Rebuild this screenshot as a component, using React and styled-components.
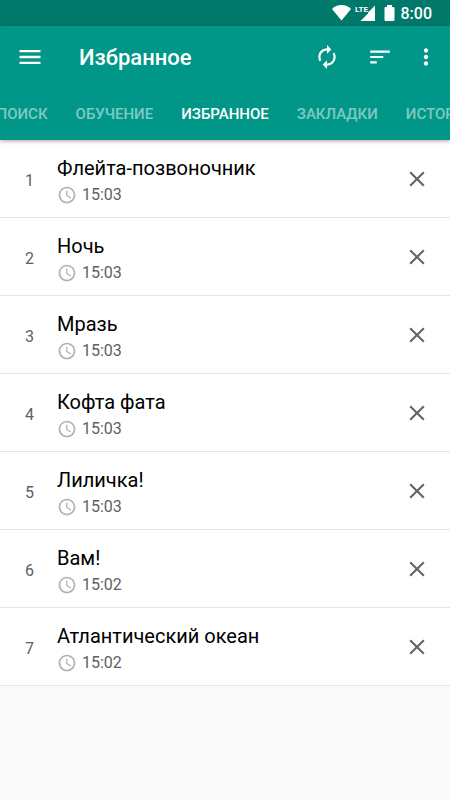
// node_modules
import React from "react";
import styled, { createGlobalStyle } from "styled-components";
import { MdAccessTime, MdAutorenew, MdClose, MdMenu, MdMoreVert, MdSort } from "react-icons/md";

// Constants
const Colors = {
    primary: "#009688",
    primaryDark: "#00796b",
    white: "#ffffff",
    background: "#fafafa",
    divider: "#e6e6e6",
    text: "#000000",
    textSecondary: "#606060",
    icon: "#666666",
    iconLight: "#b0b0b0",
    tab: "rgba(255, 255, 255, 0.5)"
};

const poems = [
    { title: "Флейта-позвоночник", time: "15:03" },
    { title: "Ночь", time: "15:03" },
    { title: "Мразь", time: "15:03" },
    { title: "Кофта фата", time: "15:03" },
    { title: "Лиличка!", time: "15:03" },
    { title: "Вам!", time: "15:02" },
    { title: "Атлантический океан", time: "15:02" }
];

// Styles
const GlobalStyle = createGlobalStyle`
    * {
        box-sizing: border-box;
    }

    body {
        margin: 0;
        background: ${Colors.background};
        color: ${Colors.text};
        font-family: Roboto, "Noto Sans", sans-serif;
    }

    button {
        margin: 0;
        padding: 0;
        border: 0;
        background: none;
        color: inherit;
        font: inherit;
        cursor: pointer;
    }

    svg {
        display: block;
        flex: none;
    }
`;

const StatusBar = styled.div`
    display: flex;
    align-items: center;
    justify-content: flex-end;
    height: 26px;
    padding-right: 18px;
    background: ${Colors.primaryDark};
    color: ${Colors.white};
`;

const Clock = styled.time`
    margin-left: 6px;
    padding-top: 2px;
    font-size: 16px;
    font-weight: 500;
    line-height: 24px;
`;

const AppBar = styled.header`
    position: relative;
    background: ${Colors.primary};
    color: ${Colors.white};
    box-shadow: 0 1px 4px rgba(60, 20, 30, 0.4);
`;

const Toolbar = styled.div`
    display: flex;
    align-items: center;
    height: 62px;
    padding: 0 11px 0 10px;
`;

const ToolbarTitle = styled.h1`
    flex: 1;
    margin: 0 0 0 29px;
    padding-top: 2px;
    font-size: 22px;
    font-weight: 500;
    line-height: 32px;
`;

const IconButton = styled.button`
    display: flex;
    align-items: center;
    justify-content: center;
    width: ${(props) => props.$width || 40}px;
    height: 40px;
`;

const Actions = styled.div`
    display: flex;
    gap: 13px;
`;

// The selected tab stays centered, its neighbours run off both edges
const Tabs = styled.nav`
    display: grid;
    grid-template-columns: minmax(0, 1fr) auto minmax(0, 1fr);
    gap: 28px;
    height: 52px;
`;

const TabGroup = styled.div`
    display: flex;
    justify-content: ${(props) => props.$align};
    gap: 28px;
    overflow: hidden;
`;

const Tab = styled.button`
    flex: none;
    color: ${(props) => (props.$active ? Colors.white : Colors.tab)};
    font-size: 15px;
    font-weight: 500;
    text-transform: uppercase;
`;

const List = styled.ol`
    margin: 0;
    padding: 0;
    list-style: none;
    background: ${Colors.white};
`;

const Row = styled.li`
    display: flex;
    align-items: center;
    height: 78px;
    padding-right: 13px;
    border-bottom: 1px solid ${Colors.divider};
`;

const RowNumber = styled.span`
    width: 57px;
    padding: 4px 0 0 2px;
    color: ${Colors.textSecondary};
    font-size: 16px;
    line-height: 24px;
    text-align: center;
`;

const RowBody = styled.div`
    flex: 1;
    min-width: 0;
    padding-top: 4px;
`;

const RowTitle = styled.h2`
    margin: 0 0 1px;
    font-size: 20px;
    font-weight: 400;
    line-height: 28px;
`;

const RowTime = styled.div`
    display: flex;
    align-items: center;
    gap: 5px;
    color: ${Colors.textSecondary};
    font-size: 16px;
    line-height: 24px;
`;

const RemoveButton = styled(IconButton)`
    color: ${Colors.icon};
`;

const SignalIcons = () => (
    <svg width="64" height="26" viewBox="0 0 64 26" fill="currentColor" aria-hidden="true">
        <path d="M1 9C3.500 6.500 6.500 5 10.500 5S17.500 6.500 20 9L10.500 20.500z" />
        <path d="M44 5.500V21H29.500L37 13.500V12.500z" />
        <text x="24" y="12" fontFamily="Liberation Sans Narrow, Roboto, sans-serif" fontSize="8" fontWeight="700">
            LTE
        </text>
        <path d="M56 5h5v2h1.500q1 0 1 1v12q0 1-1 1h-8q-1 0-1-1V8q0-1 1-1H56z" />
    </svg>
);

const PoemRow = ({ number, title, time }) => (
    <Row>
        <RowNumber>{number}</RowNumber>
        <RowBody>
            <RowTitle>{title}</RowTitle>
            <RowTime>
                <MdAccessTime size={20} color={Colors.iconLight} />
                <time>{time}</time>
            </RowTime>
        </RowBody>
        <RemoveButton type="button" aria-label={`Удалить: ${title}`}>
            <MdClose size={26} />
        </RemoveButton>
    </Row>
);

const App = () => (
    <>
        <GlobalStyle />
        <StatusBar>
            <SignalIcons />
            <Clock>8:00</Clock>
        </StatusBar>
        <AppBar>
            <Toolbar>
                <IconButton type="button" aria-label="Меню">
                    <MdMenu size={28} />
                </IconButton>
                <ToolbarTitle>Избранное</ToolbarTitle>
                <Actions>
                    <IconButton type="button" aria-label="Обновить">
                        <MdAutorenew size={26} />
                    </IconButton>
                    <IconButton type="button" aria-label="Сортировка">
                        <MdSort size={26} />
                    </IconButton>
                    <IconButton type="button" aria-label="Ещё" $width={26}>
                        <MdMoreVert size={26} />
                    </IconButton>
                </Actions>
            </Toolbar>
            <Tabs>
                <TabGroup $align="flex-end">
                    <Tab type="button">Поиск</Tab>
                    <Tab type="button">Обучение</Tab>
                </TabGroup>
                <Tab type="button" $active aria-current="page">
                    Избранное
                </Tab>
                <TabGroup $align="flex-start">
                    <Tab type="button">Закладки</Tab>
                    <Tab type="button">История</Tab>
                </TabGroup>
            </Tabs>
        </AppBar>
        <main>
            <List>
                {poems.map((poem, index) => (
                    <PoemRow key={poem.title} number={index + 1} title={poem.title} time={poem.time} />
                ))}
            </List>
        </main>
    </>
);

export default App;
